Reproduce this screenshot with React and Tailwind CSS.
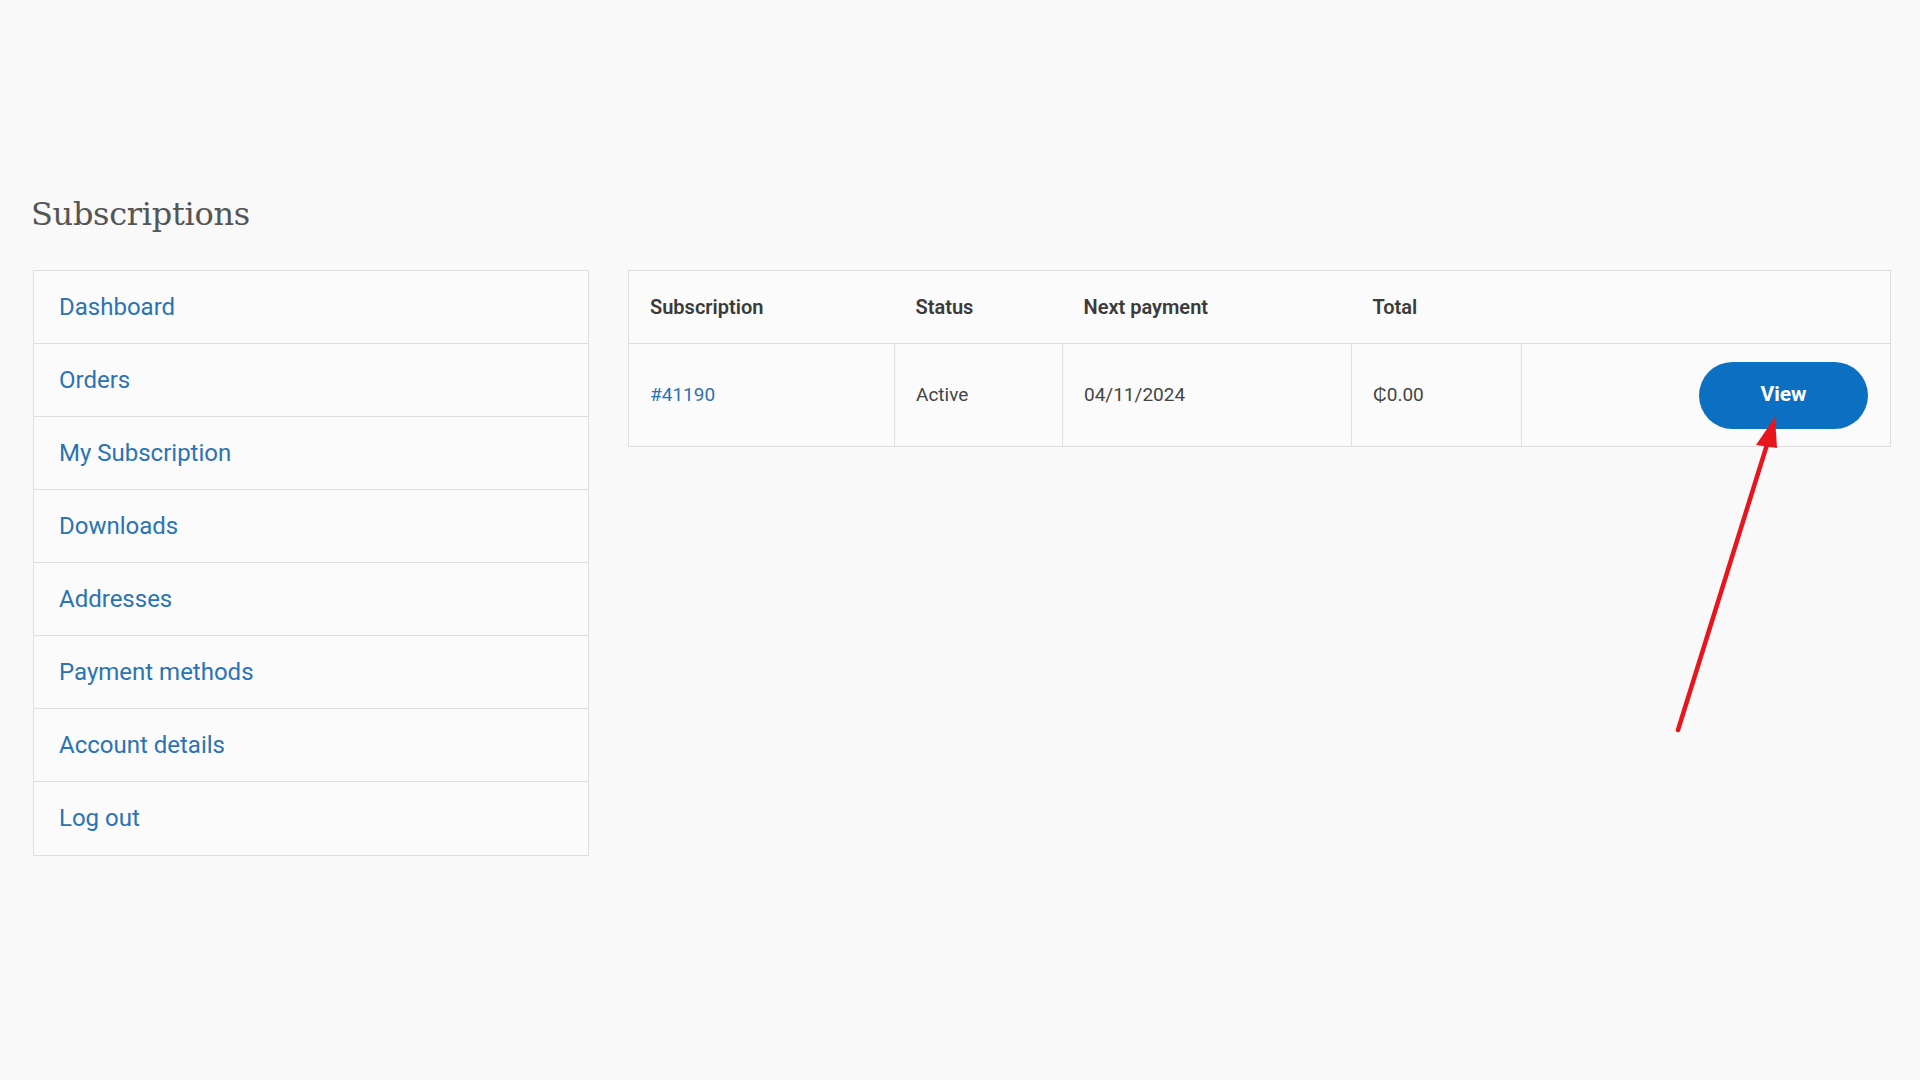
import React from 'react';

const navItems = [
  'Dashboard',
  'Orders',
  'My Subscription',
  'Downloads',
  'Addresses',
  'Payment methods',
  'Account details',
  'Log out',
];

export default function App() {
  return (
    <div className="relative min-h-screen w-full bg-[#f9f9f9] font-['Roboto','Liberation_Sans',sans-serif]">
      <div className="pl-[33px] pr-[29px] pt-[193px]">
        {/* Page title */}
        <h1 className="ml-[-2px] text-[32px] leading-[42px] tracking-[-0.3px] text-[#555] font-['DejaVu_Serif',serif]">
          Subscriptions
        </h1>

        <div className="mt-[35px] flex items-start gap-[39px]">
          {/* Account navigation */}
          <nav className="w-[556px] shrink-0 border border-[#dedede] bg-[#fbfbfb]">
            {navItems.map((item, i) => (
              <a
                key={item}
                href="#"
                className={`flex h-[73px] items-center px-[25px] pb-[1px] text-[24px] text-[#2a73b4] ${
                  i < navItems.length - 1 ? 'border-b border-[#dedede]' : ''
                }`}
              >
                {item}
              </a>
            ))}
          </nav>

          {/* Subscriptions table */}
          <table className="flex-1 border-collapse border border-[#dedede] bg-[#fbfbfb] text-left">
            <thead>
              <tr className="h-[73px] border-b border-[#dedede] text-[20px] text-[#3a3a3a]">
                <th className="w-[266px] px-[21px] font-semibold">Subscription</th>
                <th className="w-[168px] px-[21px] font-semibold">Status</th>
                <th className="w-[289px] px-[21px] font-semibold">Next payment</th>
                <th className="w-[170px] px-[21px] font-semibold">Total</th>
                <th className="px-[21px]"></th>
              </tr>
            </thead>
            <tbody>
              <tr className="h-[103px] text-[19px] text-[#444]">
                <td className="border-r border-[#dedede] px-[21px]">
                  <a href="#" className="text-[#2a73b4]">#41190</a>
                </td>
                <td className="border-r border-[#dedede] px-[21px]">Active</td>
                <td className="border-r border-[#dedede] px-[21px]">04/11/2024</td>
                <td className="border-r border-[#dedede] px-[21px]">₵0.00</td>
                <td className="pr-[22px] text-right">
                  <button className="inline-flex h-[67px] w-[169px] items-center justify-center rounded-full bg-[#0c70c2] text-[21px] font-bold text-white">
                    View
                  </button>
                </td>
              </tr>
            </tbody>
          </table>
        </div>
      </div>

      {/* Red annotation arrow */}
      <svg
        className="pointer-events-none absolute left-[1660px] top-[405px]"
        width="140"
        height="340"
        viewBox="0 0 140 340"
      >
        <line x1="18" y1="325" x2="110" y2="30" stroke="#e8161c" strokeWidth="4.5" strokeLinecap="round" />
        <polygon points="115,12 96,40 117,43" fill="#e8161c" />
      </svg>
    </div>
  );
}
